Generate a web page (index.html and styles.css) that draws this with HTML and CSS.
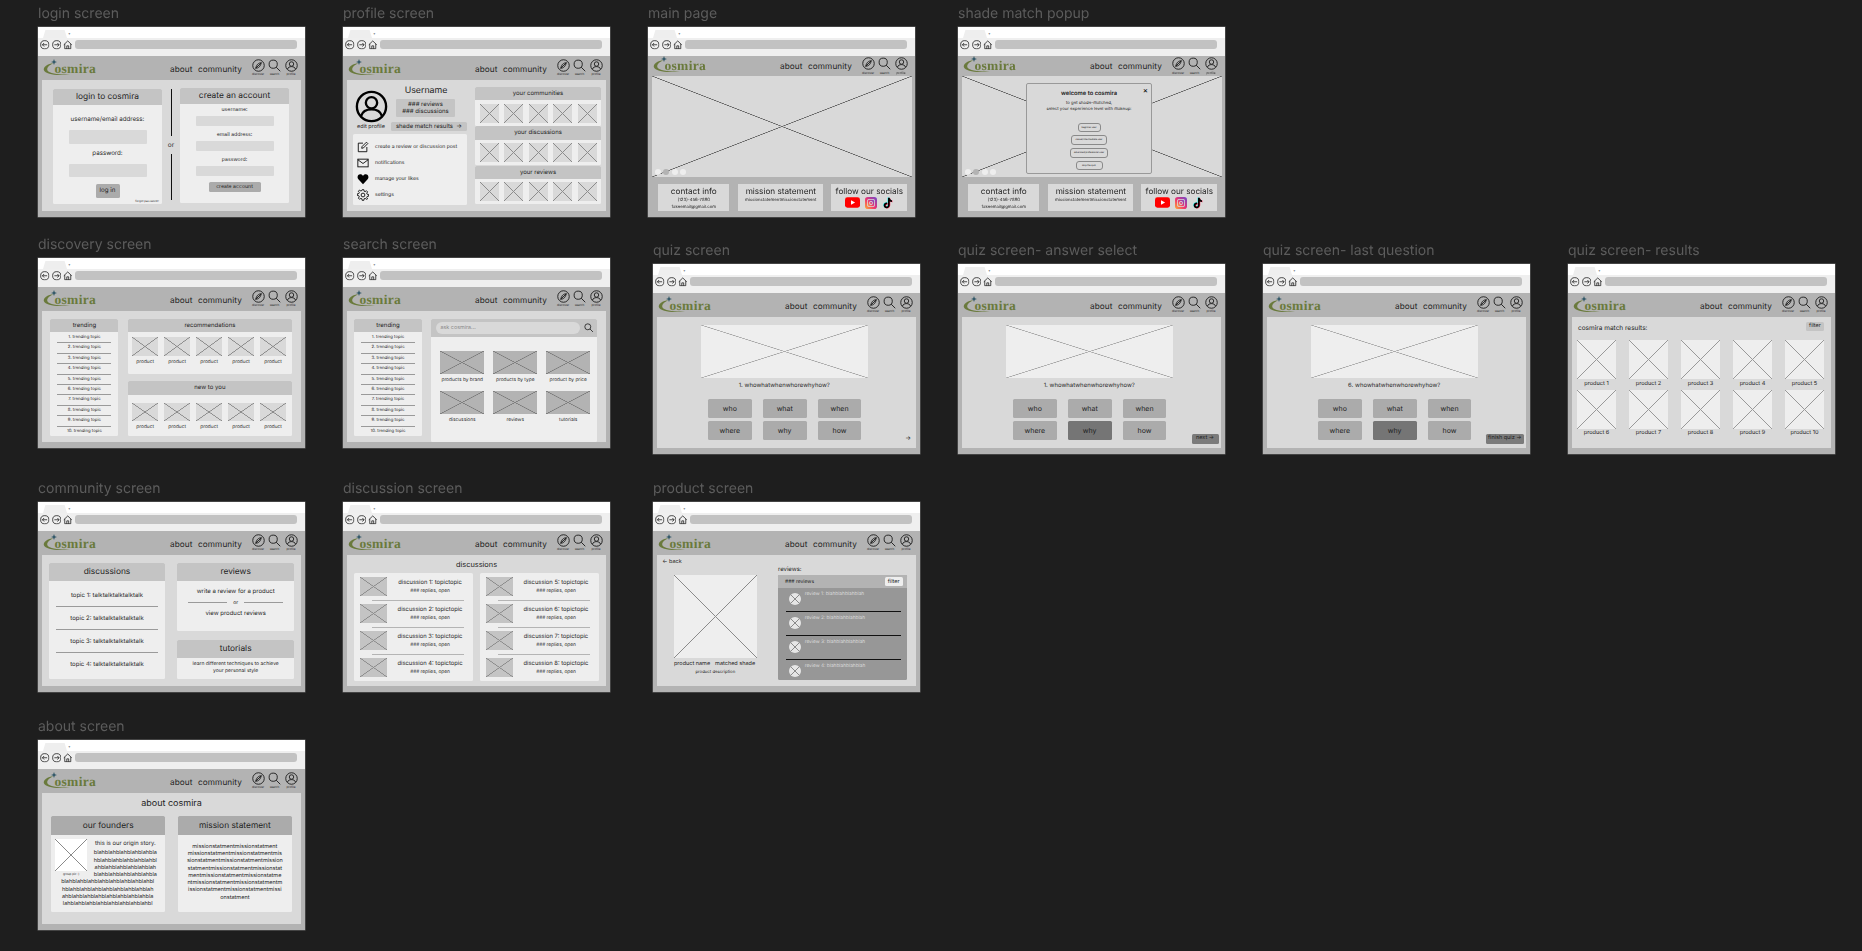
FILE: index.html
```html
<!DOCTYPE html>
<html lang="en">
<head>
  <meta charset="UTF-8" />
  <title>cosmira wireframes</title>
  <link rel="stylesheet" href="styles.css">
</head>
<body>

<svg class="defs" aria-hidden="true">
  <symbol id="i-back" viewBox="0 0 12 12"><circle cx="6" cy="6" r="5.2"/><path d="M9 6H3M5.2 3.8 3 6l2.2 2.2"/></symbol>
  <symbol id="i-fwd" viewBox="0 0 12 12"><circle cx="6" cy="6" r="5.2"/><path d="M3 6h6M6.8 3.8 9 6 6.8 8.2"/></symbol>
  <symbol id="i-home" viewBox="0 0 12 12"><path d="M1 6 6 1.2 11 6M2.2 5v6h7.6V5M4.8 11V7.4h2.4V11"/></symbol>
  <symbol id="i-compass" viewBox="0 0 14 14"><circle cx="7" cy="7" r="6.2"/><path d="M10 4C7 4.2 5 5.800 4 10 7 9.800 9 8.200 10 4ZM4 10l6-6"/></symbol>
  <symbol id="i-search" viewBox="0 0 14 14"><circle cx="5.600" cy="5.600" r="4.400"/><path d="m8.800 8.800 4.400 4.400"/></symbol>
  <symbol id="i-profile" viewBox="0 0 14 14"><circle cx="7" cy="7" r="6.200"/><circle cx="7" cy="5.400" r="2.400"/><path d="M2.600 11c.6-2 2.400-2.800 4.400-2.800s3.800.8 4.400 2.800"/></symbol>
  <symbol id="i-edit" viewBox="0 0 14 14"><path d="M7 2.500H1.500v10h10V7M5.500 8.500l.4-2L11 1.400l1.600 1.600-5.100 5.100z"/></symbol>
  <symbol id="i-mail" viewBox="0 0 14 14"><rect x="1" y="2.500" width="12" height="9"/><path d="m1 3.200 6 4.400 6-4.400"/></symbol>
  <symbol id="i-heart" viewBox="0 0 14 14"><path class="solid" d="M7 13 1.600 7.400C-.4 5 1 1.600 3.800 1.600 5.200 1.600 6.400 2.400 7 3.600 7.600 2.400 8.800 1.600 10.200 1.600 13 1.600 14.400 5 12.400 7.400z"/></symbol>
  <symbol id="i-gear" viewBox="0 0 14 14"><circle cx="7" cy="7" r="2.200"/><path d="M6 .8h2l.3 1.800 1.200.5L11 2l1.400 1.400-1.100 1.500.5 1.200 1.800.3v2l-1.800.3-.5 1.200 1.100 1.500L11 12l-1.500-1.100-1.200.5-.3 1.800H6l-.3-1.800-1.200-.5L3 12l-1.400-1.400 1.100-1.500-.5-1.200L.4 7.600v-2l1.800-.3.5-1.200L1.600 2.600 3 1.200l1.500 1.100 1.200-.5z"/></symbol>
  <symbol id="i-logo" viewBox="0 0 30 20"><path class="olive" d="M11 4C4 5 .3 8 .8 11 2.500 15.500 14 17 27 15.400 17 16 6.500 14.500 4.500 11.500 3.300 9 6 6 11 4Z"/><path class="star" d="m11 0 .8 2.200L14 3l-2.200.8L11 6l-.8-2.200L8 3l2.200-.8z"/></symbol>
  <symbol id="i-yt" viewBox="0 0 16 11"><rect width="16" height="11" rx="2.600" fill="#f00"/><path d="m6.400 3 4.400 2.500-4.400 2.500z" fill="#fff"/></symbol>
  <symbol id="i-ig" viewBox="0 0 12 12">
    <defs><linearGradient id="ig" x1="0" y1="1" x2="1" y2="0"><stop offset="0" stop-color="#fdb034"/><stop offset=".45" stop-color="#f0326e"/><stop offset="1" stop-color="#6a4ad0"/></linearGradient></defs>
    <rect width="12" height="12" rx="2.800" fill="url(#ig)"/><rect x="2" y="2" width="8" height="8" rx="2.200" fill="#d9d9d9"/><rect x="2.800" y="2.800" width="6.400" height="6.400" rx="1.600" fill="url(#ig)"/><circle cx="6" cy="6" r="1.900" fill="#d9d9d9"/><circle cx="6" cy="6" r="1.100" fill="url(#ig)"/>
  </symbol>
  <symbol id="i-tt" viewBox="0 0 14 14">
    <path fill="#25f4ee" transform="translate(-.6 -.4)" d="M7 1h2c.2 1.600 1.200 2.600 2.600 2.800v2c-1 0-1.900-.3-2.600-.9v4.400c0 2.200-1.700 3.700-3.600 3.700S2 11.500 2 9.800c0-2 1.800-3.600 4-3.300v2.100c-1-.3-1.900.3-1.900 1.200 0 .8.600 1.400 1.400 1.400S7 10.600 7 9.600z"/>
    <path fill="#fe2c55" transform="translate(.6 .4)" d="M7 1h2c.2 1.600 1.200 2.600 2.600 2.800v2c-1 0-1.900-.3-2.600-.9v4.400c0 2.200-1.700 3.700-3.600 3.700S2 11.500 2 9.800c0-2 1.800-3.600 4-3.300v2.100c-1-.3-1.900.3-1.900 1.200 0 .8.600 1.400 1.400 1.400S7 10.600 7 9.600z"/>
    <path fill="#000" d="M7 1h2c.2 1.600 1.200 2.600 2.600 2.800v2c-1 0-1.900-.3-2.600-.9v4.400c0 2.200-1.700 3.700-3.600 3.700S2 11.500 2 9.800c0-2 1.800-3.600 4-3.300v2.100c-1-.3-1.900.3-1.900 1.200 0 .8.600 1.400 1.400 1.400S7 10.600 7 9.600z"/>
  </symbol>
</svg>

<!-- login -->
<section class="board b-login">
  <h3>login screen</h3>
  <div class="frame">
    <div class="tabs"><span class="tab"></span><span class="plus">+</span></div>
    <div class="toolbar"><svg><use href="#i-back"/></svg><svg><use href="#i-fwd"/></svg><svg><use href="#i-home"/></svg><div class="url"></div></div>
    <header class="nav">
      <div class="logo"><svg><use href="#i-logo"/></svg>osmira</div>
      <div class="links"><span>about</span><span>community</span></div>
      <div class="nav-icons"><div><svg><use href="#i-compass"/></svg>discover</div><div><svg><use href="#i-search"/></svg>search</div><div><svg><use href="#i-profile"/></svg>profile</div></div>
    </header>
    <main class="page login">
      <div class="card login-card">
        <div class="card-head t-big">login to cosmira</div>
        <div class="form">
          <label>username/email address:</label><div class="input"></div>
          <label>password:</label><div class="input"></div>
          <div class="btn">log in</div>
          <div class="forgot">forgot password?</div>
        </div>
      </div>
      <div class="or-col"><i></i><span>or</span><i></i></div>
      <div class="card login-card signup">
        <div class="card-head t-big">create an account</div>
        <div class="form form-small">
          <label>username:</label><div class="input"></div>
          <label>email address:</label><div class="input"></div>
          <label>password:</label><div class="input"></div>
          <div class="btn">create account</div>
        </div>
      </div>
    </main>
  </div>
</section>

<!-- profile -->
<section class="board b-profile">
  <h3>profile screen</h3>
  <div class="frame">
    <div class="tabs"><span class="tab"></span><span class="plus">+</span></div>
    <div class="toolbar"><svg><use href="#i-back"/></svg><svg><use href="#i-fwd"/></svg><svg><use href="#i-home"/></svg><div class="url"></div></div>
    <header class="nav">
      <div class="logo"><svg><use href="#i-logo"/></svg>osmira</div>
      <div class="links"><span>about</span><span>community</span></div>
      <div class="nav-icons"><div><svg><use href="#i-compass"/></svg>discover</div><div><svg><use href="#i-search"/></svg>search</div><div><svg><use href="#i-profile"/></svg>profile</div></div>
    </header>
    <main class="page profile">
      <div class="profile-left">
        <div class="profile-top">
          <div class="avatar"><svg><use href="#i-profile"/></svg><span>edit profile</span></div>
          <div class="profile-info">
            <div class="username">Username</div>
            <div class="stats">### reviews<br>### discussions</div>
            <div class="shade-btn">shade match results &nbsp;→</div>
          </div>
        </div>
        <ul class="card profile-menu">
          <li><svg><use href="#i-edit"/></svg>create a review or discussion post</li>
          <li><svg><use href="#i-mail"/></svg>notifications</li>
          <li><svg><use href="#i-heart"/></svg>manage your likes</li>
          <li><svg><use href="#i-gear"/></svg>settings</li>
        </ul>
      </div>
      <div class="profile-right">
        <div class="card"><div class="card-head">your communities</div><div class="thumbs-19"><div class="ph"></div><div class="ph"></div><div class="ph"></div><div class="ph"></div><div class="ph"></div></div></div>
        <div class="card"><div class="card-head">your discussions</div><div class="thumbs-19"><div class="ph"></div><div class="ph"></div><div class="ph"></div><div class="ph"></div><div class="ph"></div></div></div>
        <div class="card"><div class="card-head">your reviews</div><div class="thumbs-19"><div class="ph"></div><div class="ph"></div><div class="ph"></div><div class="ph"></div><div class="ph"></div></div></div>
      </div>
    </main>
  </div>
</section>

<!-- main page -->
<section class="board b-main">
  <h3>main page</h3>
  <div class="frame">
    <div class="tabs"><span class="tab"></span><span class="plus">+</span></div>
    <div class="toolbar"><svg><use href="#i-back"/></svg><svg><use href="#i-fwd"/></svg><svg><use href="#i-home"/></svg><div class="url"></div></div>
    <header class="nav nav-short">
      <div class="logo"><svg><use href="#i-logo"/></svg>osmira</div>
      <div class="links"><span>about</span><span>community</span></div>
      <div class="nav-icons"><div><svg><use href="#i-compass"/></svg>discover</div><div><svg><use href="#i-search"/></svg>search</div><div><svg><use href="#i-profile"/></svg>profile</div></div>
    </header>
    <div class="hero ph"><div class="dots"><i></i><i></i><i></i><i></i></div></div>
    <footer class="foot">
      <div class="foot-card contact"><b>contact info</b><span>(123)-456-7890<br>fakeemail@gmail.com</span></div>
      <div class="foot-card mission"><b>mission statement</b><span>missionstatementmissionstatement</span></div>
      <div class="foot-card socials"><b>follow our socials</b><div class="social-icons"><svg class="yt"><use href="#i-yt"/></svg><svg><use href="#i-ig"/></svg><svg><use href="#i-tt"/></svg></div></div>
    </footer>
  </div>
</section>

<!-- popup -->
<section class="board b-popup">
  <h3>shade match popup</h3>
  <div class="frame">
    <div class="tabs"><span class="tab"></span><span class="plus">+</span></div>
    <div class="toolbar"><svg><use href="#i-back"/></svg><svg><use href="#i-fwd"/></svg><svg><use href="#i-home"/></svg><div class="url"></div></div>
    <header class="nav nav-short">
      <div class="logo"><svg><use href="#i-logo"/></svg>osmira</div>
      <div class="links"><span>about</span><span>community</span></div>
      <div class="nav-icons"><div><svg><use href="#i-compass"/></svg>discover</div><div><svg><use href="#i-search"/></svg>search</div><div><svg><use href="#i-profile"/></svg>profile</div></div>
    </header>
    <div class="hero ph"><div class="dots"><i></i><i></i><i></i><i></i></div></div>
    <footer class="foot">
      <div class="foot-card contact"><b>contact info</b><span>(123)-456-7890<br>fakeemail@gmail.com</span></div>
      <div class="foot-card mission"><b>mission statement</b><span>missionstatementmissionstatement</span></div>
      <div class="foot-card socials"><b>follow our socials</b><div class="social-icons"><svg class="yt"><use href="#i-yt"/></svg><svg><use href="#i-ig"/></svg><svg><use href="#i-tt"/></svg></div></div>
    </footer>
    <div class="popup">
      <span class="close">×</span>
      <strong>welcome to cosmira</strong>
      <p>to get shade-matched,<br>select your experience level with makeup:</p>
      <div class="pop-btn w1">beginner user</div>
      <div class="pop-btn w2">casual/intermediate user</div>
      <div class="pop-btn w3">advanced/professional user</div>
      <div class="pop-btn w4">skip the quiz</div>
    </div>
  </div>
</section>

<!-- discovery -->
<section class="board b-discovery">
  <h3>discovery screen</h3>
  <div class="frame">
    <div class="tabs"><span class="tab"></span><span class="plus">+</span></div>
    <div class="toolbar"><svg><use href="#i-back"/></svg><svg><use href="#i-fwd"/></svg><svg><use href="#i-home"/></svg><div class="url"></div></div>
    <header class="nav">
      <div class="logo"><svg><use href="#i-logo"/></svg>osmira</div>
      <div class="links"><span>about</span><span>community</span></div>
      <div class="nav-icons"><div><svg><use href="#i-compass"/></svg>discover</div><div><svg><use href="#i-search"/></svg>search</div><div><svg><use href="#i-profile"/></svg>profile</div></div>
    </header>
    <main class="page discovery">
      <div class="card trending">
        <div class="card-head">trending</div>
        <ol>
          <li>1. trending topic</li><li>2. trending topic</li><li>3. trending topic</li><li>4. trending topic</li><li>5. trending topic</li>
          <li>6. trending topic</li><li>7. trending topic</li><li>8. trending topic</li><li>9. trending topic</li><li>10. trending topic</li>
        </ol>
      </div>
      <div class="disc-col">
        <div class="card">
          <div class="card-head">recommendations</div>
          <div class="products"><div><div class="ph"></div>product</div><div><div class="ph"></div>product</div><div><div class="ph"></div>product</div><div><div class="ph"></div>product</div><div><div class="ph"></div>product</div></div>
        </div>
        <div class="card">
          <div class="card-head head-tall">new to you</div>
          <div class="products products-low"><div><div class="ph"></div>product</div><div><div class="ph"></div>product</div><div><div class="ph"></div>product</div><div><div class="ph"></div>product</div><div><div class="ph"></div>product</div></div>
        </div>
      </div>
    </main>
  </div>
</section>

<!-- search -->
<section class="board b-search">
  <h3>search screen</h3>
  <div class="frame">
    <div class="tabs"><span class="tab"></span><span class="plus">+</span></div>
    <div class="toolbar"><svg><use href="#i-back"/></svg><svg><use href="#i-fwd"/></svg><svg><use href="#i-home"/></svg><div class="url"></div></div>
    <header class="nav">
      <div class="logo"><svg><use href="#i-logo"/></svg>osmira</div>
      <div class="links"><span>about</span><span>community</span></div>
      <div class="nav-icons"><div><svg><use href="#i-compass"/></svg>discover</div><div><svg><use href="#i-search"/></svg>search</div><div><svg><use href="#i-profile"/></svg>profile</div></div>
    </header>
    <main class="page discovery search">
      <div class="card trending">
        <div class="card-head">trending</div>
        <ol>
          <li>1. trending topic</li><li>2. trending topic</li><li>3. trending topic</li><li>4. trending topic</li><li>5. trending topic</li>
          <li>6. trending topic</li><li>7. trending topic</li><li>8. trending topic</li><li>9. trending topic</li><li>10. trending topic</li>
        </ol>
      </div>
      <div class="card search-main">
        <div class="search-head"><div class="ask">ask cosmira...</div><svg><use href="#i-search"/></svg></div>
        <div class="search-grid">
          <div><div class="ph"></div>products by brand</div><div><div class="ph"></div>products by type</div><div><div class="ph"></div>product by price</div>
          <div><div class="ph"></div>discussions</div><div><div class="ph"></div>reviews</div><div><div class="ph"></div>tutorials</div>
        </div>
      </div>
    </main>
  </div>
</section>

<!-- quiz -->
<section class="board b-quiz">
  <h3>quiz screen</h3>
  <div class="frame">
    <div class="tabs"><span class="tab"></span><span class="plus">+</span></div>
    <div class="toolbar"><svg><use href="#i-back"/></svg><svg><use href="#i-fwd"/></svg><svg><use href="#i-home"/></svg><div class="url"></div></div>
    <header class="nav">
      <div class="logo"><svg><use href="#i-logo"/></svg>osmira</div>
      <div class="links"><span>about</span><span>community</span></div>
      <div class="nav-icons"><div><svg><use href="#i-compass"/></svg>discover</div><div><svg><use href="#i-search"/></svg>search</div><div><svg><use href="#i-profile"/></svg>profile</div></div>
    </header>
    <main class="page quiz">
      <div class="ph quiz-img"></div>
      <div class="question">1. whowhatwhenwhorewhyhow?</div>
      <div class="answers"><div>who</div><div>what</div><div>when</div><div>where</div><div>why</div><div>how</div></div>
      <div class="next plain">→</div>
    </main>
  </div>
</section>

<section class="board b-answer">
  <h3>quiz screen- answer select</h3>
  <div class="frame">
    <div class="tabs"><span class="tab"></span><span class="plus">+</span></div>
    <div class="toolbar"><svg><use href="#i-back"/></svg><svg><use href="#i-fwd"/></svg><svg><use href="#i-home"/></svg><div class="url"></div></div>
    <header class="nav">
      <div class="logo"><svg><use href="#i-logo"/></svg>osmira</div>
      <div class="links"><span>about</span><span>community</span></div>
      <div class="nav-icons"><div><svg><use href="#i-compass"/></svg>discover</div><div><svg><use href="#i-search"/></svg>search</div><div><svg><use href="#i-profile"/></svg>profile</div></div>
    </header>
    <main class="page quiz">
      <div class="ph quiz-img"></div>
      <div class="question">1. whowhatwhenwhorewhyhow?</div>
      <div class="answers"><div>who</div><div>what</div><div>when</div><div>where</div><div class="picked">why</div><div>how</div></div>
      <div class="next">next →</div>
    </main>
  </div>
</section>

<section class="board b-last">
  <h3>quiz screen- last question</h3>
  <div class="frame">
    <div class="tabs"><span class="tab"></span><span class="plus">+</span></div>
    <div class="toolbar"><svg><use href="#i-back"/></svg><svg><use href="#i-fwd"/></svg><svg><use href="#i-home"/></svg><div class="url"></div></div>
    <header class="nav">
      <div class="logo"><svg><use href="#i-logo"/></svg>osmira</div>
      <div class="links"><span>about</span><span>community</span></div>
      <div class="nav-icons"><div><svg><use href="#i-compass"/></svg>discover</div><div><svg><use href="#i-search"/></svg>search</div><div><svg><use href="#i-profile"/></svg>profile</div></div>
    </header>
    <main class="page quiz">
      <div class="ph quiz-img"></div>
      <div class="question">6. whowhatwhenwhorewhyhow?</div>
      <div class="answers"><div>who</div><div>what</div><div>when</div><div>where</div><div class="picked">why</div><div>how</div></div>
      <div class="next">finish quiz →</div>
    </main>
  </div>
</section>

<section class="board b-results">
  <h3>quiz screen- results</h3>
  <div class="frame">
    <div class="tabs"><span class="tab"></span><span class="plus">+</span></div>
    <div class="toolbar"><svg><use href="#i-back"/></svg><svg><use href="#i-fwd"/></svg><svg><use href="#i-home"/></svg><div class="url"></div></div>
    <header class="nav">
      <div class="logo"><svg><use href="#i-logo"/></svg>osmira</div>
      <div class="links"><span>about</span><span>community</span></div>
      <div class="nav-icons"><div><svg><use href="#i-compass"/></svg>discover</div><div><svg><use href="#i-search"/></svg>search</div><div><svg><use href="#i-profile"/></svg>profile</div></div>
    </header>
    <main class="page results">
      <div class="results-head"><span>cosmira match results:</span><div class="filter">filter</div></div>
      <div class="results-grid">
        <div><div class="ph"></div>product 1</div><div><div class="ph"></div>product 2</div><div><div class="ph"></div>product 3</div><div><div class="ph"></div>product 4</div><div><div class="ph"></div>product 5</div>
        <div><div class="ph"></div>product 6</div><div><div class="ph"></div>product 7</div><div><div class="ph"></div>product 8</div><div><div class="ph"></div>product 9</div><div><div class="ph"></div>product 10</div>
      </div>
    </main>
  </div>
</section>

<!-- community -->
<section class="board b-community">
  <h3>community screen</h3>
  <div class="frame">
    <div class="tabs"><span class="tab"></span><span class="plus">+</span></div>
    <div class="toolbar"><svg><use href="#i-back"/></svg><svg><use href="#i-fwd"/></svg><svg><use href="#i-home"/></svg><div class="url"></div></div>
    <header class="nav">
      <div class="logo"><svg><use href="#i-logo"/></svg>osmira</div>
      <div class="links"><span>about</span><span>community</span></div>
      <div class="nav-icons"><div><svg><use href="#i-compass"/></svg>discover</div><div><svg><use href="#i-search"/></svg>search</div><div><svg><use href="#i-profile"/></svg>profile</div></div>
    </header>
    <main class="page community">
      <div class="card comm-left">
        <div class="card-head t-big head-18">discussions</div>
        <ul>
          <li>topic 1: talktalktalktalktalk</li><li>topic 2: talktalktalktalktalk</li><li>topic 3: talktalktalktalktalk</li><li>topic 4: talktalktalktalktalk</li>
        </ul>
      </div>
      <div class="comm-right">
        <div class="card reviews-card">
          <div class="card-head t-big head-18">reviews</div>
          <p>write a review for a product</p>
          <div class="or-line"><i></i>or<i></i></div>
          <p>view product reviews</p>
        </div>
        <div class="card tutorials-card">
          <div class="card-head t-big head-18">tutorials</div>
          <p>learn different techniques to achieve<br>your personal style</p>
        </div>
      </div>
    </main>
  </div>
</section>

<section class="board b-discussion">
  <h3>discussion screen</h3>
  <div class="frame">
    <div class="tabs"><span class="tab"></span><span class="plus">+</span></div>
    <div class="toolbar"><svg><use href="#i-back"/></svg><svg><use href="#i-fwd"/></svg><svg><use href="#i-home"/></svg><div class="url"></div></div>
    <header class="nav">
      <div class="logo"><svg><use href="#i-logo"/></svg>osmira</div>
      <div class="links"><span>about</span><span>community</span></div>
      <div class="nav-icons"><div><svg><use href="#i-compass"/></svg>discover</div><div><svg><use href="#i-search"/></svg>search</div><div><svg><use href="#i-profile"/></svg>profile</div></div>
    </header>
    <main class="page discussion">
      <h4>discussions</h4>
      <div class="disc-grid">
        <div class="card disc-card">
          <div class="disc-row"><div class="ph"></div><div>discussion 1: topictopic<small>### replies, open</small></div></div>
          <div class="disc-row"><div class="ph"></div><div>discussion 2: topictopic<small>### replies, open</small></div></div>
          <div class="disc-row"><div class="ph"></div><div>discussion 3: topictopic<small>### replies, open</small></div></div>
          <div class="disc-row"><div class="ph"></div><div>discussion 4: topictopic<small>### replies, open</small></div></div>
        </div>
        <div class="card disc-card">
          <div class="disc-row"><div class="ph"></div><div>discussion 5: topictopic<small>### replies, open</small></div></div>
          <div class="disc-row"><div class="ph"></div><div>discussion 6: topictopic<small>### replies, open</small></div></div>
          <div class="disc-row"><div class="ph"></div><div>discussion 7: topictopic<small>### replies, open</small></div></div>
          <div class="disc-row"><div class="ph"></div><div>discussion 8: topictopic<small>### replies, open</small></div></div>
        </div>
      </div>
    </main>
  </div>
</section>

<section class="board b-product">
  <h3>product screen</h3>
  <div class="frame">
    <div class="tabs"><span class="tab"></span><span class="plus">+</span></div>
    <div class="toolbar"><svg><use href="#i-back"/></svg><svg><use href="#i-fwd"/></svg><svg><use href="#i-home"/></svg><div class="url"></div></div>
    <header class="nav">
      <div class="logo"><svg><use href="#i-logo"/></svg>osmira</div>
      <div class="links"><span>about</span><span>community</span></div>
      <div class="nav-icons"><div><svg><use href="#i-compass"/></svg>discover</div><div><svg><use href="#i-search"/></svg>search</div><div><svg><use href="#i-profile"/></svg>profile</div></div>
    </header>
    <main class="page product">
      <div class="product-left">
        <div class="back">← back</div>
        <div class="ph product-img"></div>
        <div class="product-name"><span>product name</span><span>matched shade</span></div>
        <div class="product-desc">product description</div>
      </div>
      <div class="product-right">
        <div class="reviews-label">reviews:</div>
        <div class="review-panel">
          <div class="review-head"><span>### reviews</span><div class="filter">filter</div></div>
          <div class="review"><div class="ph"></div>review 1: blahblahblahblah</div>
          <div class="review"><div class="ph"></div>review 2: blahblahblahblah</div>
          <div class="review"><div class="ph"></div>review 3: blahblahblahblah</div>
          <div class="review"><div class="ph"></div>review 4: blahblahblahblah</div>
        </div>
      </div>
    </main>
  </div>
</section>

<!-- about -->
<section class="board b-about">
  <h3>about screen</h3>
  <div class="frame">
    <div class="tabs"><span class="tab"></span><span class="plus">+</span></div>
    <div class="toolbar"><svg><use href="#i-back"/></svg><svg><use href="#i-fwd"/></svg><svg><use href="#i-home"/></svg><div class="url"></div></div>
    <header class="nav">
      <div class="logo"><svg><use href="#i-logo"/></svg>osmira</div>
      <div class="links"><span>about</span><span>community</span></div>
      <div class="nav-icons"><div><svg><use href="#i-compass"/></svg>discover</div><div><svg><use href="#i-search"/></svg>search</div><div><svg><use href="#i-profile"/></svg>profile</div></div>
    </header>
    <main class="page about">
      <h4>about cosmira</h4>
      <div class="about-grid">
        <div class="card">
          <div class="card-head t-big head-dark">our founders</div>
          <div class="founders">
            <figure><div class="ph"></div><figcaption>group pic :)</figcaption></figure>
            <div class="origin">this is our origin story.</div>
            <p>blahblahblahblahblahbla<br>hblahblahblahblahblahbl<br>ahblahblahblahblahblah<br>blahblahblahblahblahbla<br>blahblahblahblahblahblahblahblahbl<br>hblahblahblahblahblahblahblahblah<br>ahblahblahblahblahblahblahblahbla<br>lahblahblahblahblahblahblahblahbl</p>
          </div>
        </div>
        <div class="card">
          <div class="card-head t-big head-dark">mission statement</div>
          <p class="mission-text">missionstatmentmissionstatment<br>missionstatmentmissionstatmentmis<br>sionstatmentmissionstatmentmission<br>statmentmissionstatmentmissionstat<br>mentmissionstatmentmissionstatme<br>ntmissionstatmentmissionstatmentm<br>issionstatmentmissionstatmentmissi<br>onstatment</p>
        </div>
      </div>
    </main>
  </div>
</section>

</body>
</html>
```

FILE: styles.css
```css
* {
  box-sizing: border-box;
}
html, body {
  margin: 0;
  height: 951px;
  overflow: hidden;
}
body {
  background: #1e1e1e;
  font-family: Inter, "Liberation Sans", sans-serif;
  color: #1e1e1e;
  position: relative;
  text-rendering: geometricPrecision;
}
h3, h4, p, ul, ol, figure {
  margin: 0;
  padding: 0;
  font-weight: 400;
  list-style: none;
}
.defs {
  position: absolute;
  width: 0;
  height: 0;
}
svg {
  display: block;
  fill: none;
  stroke: currentColor;
  stroke-width: 1;
}

/* canvas placement: each board sits free on the figma canvas */
.board {
  position: absolute;
  width: 267px;
  filter: blur(.3px);
}
.board h3 {
  height: 22px;
  font-size: 14px;
  line-height: 17px;
  color: #5c5c5c;
  white-space: nowrap;
}
.b-login { left: 38px; top: 5px; }
.b-profile { left: 343px; top: 5px; }
.b-main { left: 648px; top: 5px; }
.b-popup { left: 958px; top: 5px; }
.b-discovery { left: 38px; top: 236px; }
.b-search { left: 343px; top: 236px; }
.b-quiz { left: 653px; top: 242px; }
.b-answer { left: 958px; top: 242px; }
.b-last { left: 1263px; top: 242px; }
.b-results { left: 1568px; top: 242px; }
.b-community { left: 38px; top: 480px; }
.b-discussion { left: 343px; top: 480px; }
.b-product { left: 653px; top: 480px; }
.b-about { left: 38px; top: 718px; }

/* browser chrome */
.frame {
  position: relative;
  width: 267px;
  height: 190px;
  background: #b3b3b3;
  display: flex;
  flex-direction: column;
  box-shadow: 0 0 0 .5px #6a6a6a;
  overflow: hidden;
}
.tabs {
  height: 11px;
  background: #fff;
  display: flex;
  align-items: flex-end;
  padding-left: 5px;
}
.tab {
  width: 24px;
  height: 8px;
  background: #eee;
  clip-path: polygon(10% 0, 90% 0, 100% 100%, 0 100%);
}
.plus {
  font-size: 4px;
  line-height: 8px;
  margin-left: 1px;
}
.toolbar {
  height: 18px;
  background: #efefef;
  display: flex;
  align-items: flex-start;
  gap: 2px;
  padding: 2px 8px 0 2px;
}
.toolbar svg {
  width: 9.5px;
  height: 9.5px;
}
.url {
  flex: 1;
  height: 9px;
  background: #c2c2c2;
  border-radius: 3px;
}

/* site nav */
.nav {
  height: 24px;
  flex: none;
  display: flex;
  align-items: center;
  padding: 0 7px 0 5px;
  background: #b3b3b3;
}
.logo {
  position: relative;
  padding-left: 11.5px;
  margin-top: 1px;
  font-family: "Liberation Serif", serif;
  font-weight: 700;
  font-size: 13.5px;
  letter-spacing: .3px;
  line-height: 14px;
  color: #6a7a3c;
}
.logo svg {
  position: absolute;
  left: 0;
  top: -3px;
  width: 30px;
  height: 20px;
  stroke: none;
}
.olive { fill: #6a7a3c; }
.star { fill: #2e5566; }
.solid { fill: currentColor; stroke: none; }
.links {
  margin-left: auto;
  display: flex;
  gap: 5.5px;
  font-size: 8.2px;
  letter-spacing: .1px;
  margin-top: 2px;
}
.nav-icons {
  margin-left: 9px;
  display: flex;
  gap: 2.5px;
  align-self: flex-start;
  padding-top: 2.5px;
  font-size: 3px;
  line-height: 4px;
  text-align: center;
}
.nav-icons > div {
  width: 14px;
  display: flex;
  flex-direction: column;
  align-items: center;
  white-space: nowrap;
}
.nav-icons svg {
  width: 13px;
  height: 13px;
  margin-bottom: .5px;
}
.nav-short {
  height: 20px;
}
.nav-short .logo { margin-top: -1px; }
.nav-short .links { margin-top: 0; }
.nav-short .nav-icons { padding-top: 1px; }

/* shared bits */
.page {
  position: relative;
  height: 131px;
  margin: 0 4px;
  background: #d9d9d9;
  flex: none;
}
.card {
  background: #eee;
  border-radius: 1.5px;
}
.card-head {
  height: 13.3px;
  display: flex;
  align-items: center;
  justify-content: center;
  background: #c4c4c4;
  border-radius: 1.5px 1.5px 0 0;
  font-size: 6px;
}
.t-big {
  height: 16px;
  font-size: 8.4px;
}
.head-18 { height: 18px; }
.head-tall { height: 14px; }
.head-dark { background: #ababab; height: 18.7px; }
.ph {
  --bg: #d9d9d9;
  --line: #8c8c8c;
  background-color: var(--bg);
  background-image:
    linear-gradient(to top right, transparent calc(50% - .6px), var(--line) calc(50% - .2px), var(--line) calc(50% + .2px), transparent calc(50% + .6px)),
    linear-gradient(to bottom right, transparent calc(50% - .6px), var(--line) calc(50% - .2px), var(--line) calc(50% + .2px), transparent calc(50% + .6px));
}
.filter {
  background: #c4c4c4;
  border-radius: 1.5px;
  display: flex;
  align-items: center;
  justify-content: center;
  width: 18px;
  height: 8.700px;
  font-size: 5.5px;
}

/* login */
.login {
  display: flex;
  padding: 9px 11px 0;
}
.login-card {
  width: 109px;
  height: 115px;
}
.signup {
  margin-top: -1px;
}
.form {
  display: flex;
  flex-direction: column;
  align-items: center;
  padding-top: 11px;
  gap: 6px;
  font-size: 6.2px;
  position: relative;
}
.form label {
  line-height: 8px;
}
.input {
  width: 78px;
  height: 13.500px;
  background: #d9d9d9;
  border-radius: 1px;
}
.btn {
  background: #ababab;
  border-radius: 1.5px;
  width: 24px;
  height: 13.500px;
  margin-top: 1px;
  display: flex;
  align-items: center;
  justify-content: center;
}
.forgot {
  position: absolute;
  right: 3px;
  bottom: -5px;
  font-size: 2.900px;
}
.form-small {
  padding-top: 2px;
  gap: 2px;
  font-size: 5.2px;
}
.form-small .input {
  height: 10px;
  margin-bottom: 3px;
}
.form-small .btn {
  width: 52px;
  height: 9.500px;
  margin-top: 1px;
}
.or-col {
  width: 18px;
  display: flex;
  flex-direction: column;
  align-items: center;
  font-size: 6.500px;
  color: #333;
  height: 111px;
}
.or-col i {
  width: 1px;
  flex: 1;
  background: #111;
}
.or-col span {
  line-height: 18px;
}

/* profile */
.profile {
  display: flex;
  gap: 8px;
  padding: 7px 5px 0 6px;
}
.profile-left {
  width: 114px;
  font-size: 5.500px;
}
.profile-top {
  display: flex;
  height: 47px;
}
.avatar {
  width: 36px;
  padding-top: 3px;
  display: flex;
  flex-direction: column;
  align-items: center;
  color: #000;
}
.avatar svg {
  width: 33px;
  height: 33px;
}
.avatar span {
  margin-top: 1px;
  line-height: 7px;
  color: #1e1e1e;
  white-space: nowrap;
}
.profile-info {
  flex: 1;
  margin-left: 2px;
  text-align: center;
  font-size: 6px;
}
.username {
  font-size: 8.800px;
  line-height: 10px;
  margin-top: -1px;
  margin-right: 6px;
}
.stats {
  width: 59px;
  margin: 3px auto 0 5px;
  padding: 1.500px 0;
  background: #c4c4c4;
  border-radius: 1px;
  line-height: 7.500px;
}
.shade-btn {
  height: 9px;
  margin-top: 5px;
  background: #c4c4c4;
  border-radius: 1.500px;
  line-height: 9px;
  white-space: nowrap;
}
.profile-menu {
  height: 71px;
  padding-top: 5px;
}
.profile-menu li {
  height: 16px;
  display: flex;
  align-items: center;
  gap: 6px;
  padding-left: 4px;
  font-size: 5.100px;
  white-space: nowrap;
}
.profile-menu svg {
  width: 12px;
  height: 12px;
  color: #000;
}
.profile-right {
  flex: 1;
  display: flex;
  flex-direction: column;
  gap: .5px;
}
.thumbs-19 {
  height: 25.500px;
  display: flex;
  align-items: center;
  gap: 5.400px;
  padding-left: 5px;
}
.thumbs-19 .ph {
  width: 19px;
  height: 19px;
}

/* discovery + search */
.discovery {
  display: flex;
  gap: 9.400px;
  padding: 7.700px 9px 0 8.400px;
}
.trending {
  width: 68px;
  height: 117.700px;
  flex: none;
}
.trending ol {
  padding: 1px 7px 0;
  text-align: center;
  font-size: 4.300px;
}
.trending li {
  height: 10.400px;
  line-height: 10.400px;
  border-bottom: .6px solid #9a9a9a;
  white-space: nowrap;
}
.trending li:last-child {
  border-bottom: 0;
}
.disc-col {
  flex: 1;
  display: flex;
  flex-direction: column;
  gap: 6.700px;
}
.disc-col .card {
  height: 55.500px;
}
.products {
  display: flex;
  gap: 6.400px;
  padding: 5.400px 4.600px 0;
  font-size: 4.800px;
  text-align: center;
}
.products > div {
  width: 25.600px;
  line-height: 7px;
}
.products .ph {
  height: 18.300px;
  margin-bottom: 3px;
}
.products-low {
  padding-top: 7.700px;
}
.search {
  gap: 9.200px;
  padding-left: 7px;
}
.search-main {
  flex: 1;
}
.search-head {
  height: 18.300px;
  display: flex;
  align-items: center;
  padding-left: 5.300px;
  background: #c4c4c4;
  border-radius: 1.500px 1.500px 0 0;
}
.ask {
  width: 144px;
  height: 12.600px;
  line-height: 12.600px;
  padding-left: 4px;
  background: #d9d9d9;
  border-radius: 6.300px;
  font-size: 5.400px;
  color: #8a8a8a;
}
.search-head svg {
  width: 9.500px;
  height: 9.500px;
  margin-left: 3.500px;
  stroke-width: 1.200;
}
.search-grid {
  display: grid;
  grid-template-columns: repeat(3, 43.500px);
  column-gap: 9.500px;
  row-gap: 7px;
  padding: 14px 0 0 9.300px;
  font-size: 4.800px;
  text-align: center;
  white-space: nowrap;
}
.search-grid > div {
  line-height: 7px;
}
.search-grid .ph {
  height: 23px;
  --bg: #b3b3b3;
  --line: #7d7d7d;
  margin-bottom: 3px;
}

/* quiz */
.quiz {
  padding: 8px 0 0 43.500px;
}
.quiz-img {
  --bg: #eee;
  --line: #aaa;
  width: 167.500px;
  height: 53px;
}
.question {
  width: 167.500px;
  text-align: center;
  font-size: 5.900px;
  line-height: 8px;
  margin-top: 4px;
  letter-spacing: .05px;
}
.answers {
  display: grid;
  grid-template-columns: repeat(3, 43.800px);
  grid-auto-rows: 18.700px;
  gap: 3.600px 11px;
  margin: 9px 0 0 7.500px;
  font-size: 7px;
}
.answers div {
  background: #ababab;
  border-radius: 1.500px;
  display: flex;
  align-items: center;
  justify-content: center;
}
.answers .picked {
  background: #757575;
}
.next {
  position: absolute;
  right: 2.500px;
  bottom: 4px;
  min-width: 27px;
  height: 9.700px;
  padding: 0 2px;
  background: #7b7b7b;
  border-radius: 1.500px;
  font-size: 5.500px;
  line-height: 9.700px;
  text-align: center;
}
.next.plain {
  min-width: 0;
  background: none;
  font-size: 6px;
  right: 3px;
}

/* results */
.results {
  padding: 5px 6px 0 5px;
}
.results-head {
  display: flex;
  justify-content: space-between;
  height: 18px;
  font-size: 6.500px;
  line-height: 10px;
  padding: 0 1px 0 1px;
}
.results-head span {
  margin-top: 1px;
}
.results-grid {
  display: grid;
  grid-template-columns: repeat(5, 39px);
  gap: 2px 13px;
  font-size: 5.600px;
  line-height: 8px;
  text-align: center;
  white-space: nowrap;
}
.results-grid .ph {
  --bg: #eee;
  --line: #999;
  height: 39px;
  margin-bottom: .5px;
}

/* community */
.community {
  display: flex;
  gap: 12.300px;
  padding: 8px 7px 0;
}
.comm-left {
  width: 116px;
  height: 116px;
}
.comm-left ul {
  padding: 3px 7px 0;
  text-align: center;
  font-size: 6px;
}
.comm-left li {
  height: 23px;
  line-height: 23px;
  border-bottom: .7px solid #9a9a9a;
}
.comm-left li:last-child {
  border-bottom: 0;
}
.comm-right {
  flex: 1;
  display: flex;
  flex-direction: column;
  gap: 9.700px;
}
.reviews-card {
  height: 67.700px;
  text-align: center;
  font-size: 6px;
}
.reviews-card p {
  line-height: 8px;
}
.reviews-card p:nth-of-type(1) {
  margin-top: 6.500px;
}
.or-line {
  display: flex;
  align-items: center;
  gap: 6px;
  padding: 0 11px;
  margin: 3px 0;
  line-height: 8px;
  font-size: 5px;
}
.or-line i {
  flex: 1;
  height: .6px;
  background: #9a9a9a;
}
.tutorials-card {
  height: 38.600px;
  text-align: center;
  font-size: 5px;
}
.tutorials-card p {
  line-height: 7px;
  padding-top: 2.500px;
}

/* discussions */
.discussion h4 {
  height: 18px;
  line-height: 19px;
  text-align: center;
  font-size: 7.400px;
}
.disc-grid {
  display: flex;
  gap: 7px;
  padding: 0 7px;
}
.disc-card {
  flex: 1;
  height: 107.700px;
  padding: 0 6px;
}
.disc-row {
  display: flex;
  align-items: center;
  gap: 6px;
  height: 27px;
  text-align: center;
  font-size: 5.800px;
  line-height: 8px;
  white-space: nowrap;
}
.disc-row .ph {
  --bg: #c4c4c4;
  width: 27px;
  height: 18.500px;
  flex: none;
}
.disc-row > div:last-child {
  flex: 1;
}
.disc-row small {
  display: block;
  font-size: 4.800px;
}
.disc-row + .disc-row {
  background: linear-gradient(#9a9a9a, #9a9a9a) no-repeat 12px 0 / 92px .7px;
}

/* product */
.product {
  display: flex;
  font-size: 5.500px;
}
.product-left {
  width: 121px;
  padding: 3px 0 0 5.300px;
  line-height: 8px;
}
.product-img {
  --bg: #eee;
  --line: #8a8a8a;
  width: 82.700px;
  height: 82.700px;
  margin: 9.300px 0 0 11.700px;
}
.product-name {
  width: 90px;
  margin: 2.500px 0 0 11.700px;
  display: flex;
  gap: 5px;
  white-space: nowrap;
}
.product-desc {
  width: 82.700px;
  margin: 1px 0 0 11.700px;
  text-align: center;
  font-size: 4.300px;
}
.product-right {
  flex: 1;
  padding: 10.500px 9px 0 0;
}
.reviews-label {
  line-height: 8px;
  font-size: 6px;
  margin-bottom: 1.800px;
}
.review-panel {
  height: 105px;
  background: #979797;
  border-radius: 1.500px;
  color: #dcdcdc;
}
.review-head {
  height: 13px;
  display: flex;
  align-items: center;
  justify-content: space-between;
  padding: 0 4.300px 0 7px;
  background: #b3b3b3;
  color: #1e1e1e;
  font-size: 5px;
}
.review-head .filter {
  background: #eee;
}
.review {
  height: 24px;
  margin: 0 6px 0 8px;
  padding: 3px 0 0 0;
  display: flex;
  align-items: flex-start;
  gap: 4px;
  font-size: 4.800px;
  line-height: 7px;
  border-bottom: .8px solid #111;
  white-space: nowrap;
}
.review:last-child {
  border-bottom: 0;
}
.review .ph {
  --bg: #e6e6e6;
  --line: #8a8a8a;
  width: 12px;
  height: 12px;
  margin: 2px 0 0 2.700px;
  border-radius: 50%;
  flex: none;
}

/* about */
.about h4 {
  height: 23.300px;
  line-height: 22px;
  text-align: center;
  font-size: 9px;
}
.about-grid {
  display: flex;
  gap: 12.300px;
  padding: 0 9px;
}
.about-grid .card {
  flex: 1;
  height: 95.400px;
}
.founders {
  padding: 4px 5px 0 4px;
  text-align: center;
  font-size: 5.500px;
  line-height: 7.250px;
  white-space: nowrap;
}
.founders figure {
  float: left;
  width: 32.300px;
  margin-right: 3px;
  font-size: 3px;
  line-height: 6px;
}
.founders figure .ph {
  --bg: #fff;
  --line: #8a8a8a;
  height: 32px;
}
.origin {
  font-size: 5.800px;
  line-height: 9px;
  margin-bottom: 2.500px;
}
.mission-text {
  padding-top: 9px;
  text-align: center;
  font-size: 5.500px;
  line-height: 7.250px;
  white-space: nowrap;
}

/* main page + popup */
.hero {
  --line: #666;
  position: relative;
  height: 101px;
  margin: 0 3.500px 0;
  flex: none;
}
.dots {
  position: absolute;
  left: 3.500px;
  bottom: 2px;
  display: flex;
  gap: 2.400px;
}
.dots i {
  width: 6px;
  height: 6px;
  border-radius: 50%;
  background: #eee;
}
.dots i:nth-child(2) {
  background: #b3b3b3;
}
.foot {
  display: flex;
  gap: 9px;
  padding: 7px 7px 0 10.300px;
  height: 40px;
}
.foot-card {
  height: 27px;
  background: #d9d9d9;
  text-align: center;
  font-size: 4.300px;
  line-height: 7px;
  white-space: nowrap;
}
.foot-card b {
  display: block;
  font-weight: 400;
  font-size: 8.200px;
  line-height: 11px;
  margin-top: 1.500px;
}
.contact { width: 71px; }
.mission { width: 85px; }
.socials { width: 76px; }
.foot-card.socials { margin-left: -1px; }
.social-icons {
  display: flex;
  justify-content: center;
  align-items: center;
  gap: 5px;
  stroke: none;
}
.social-icons svg {
  width: 12px;
  height: 12px;
  stroke: none;
}
.social-icons .yt {
  width: 15px;
  height: 11px;
}
.popup {
  position: absolute;
  left: 68px;
  top: 56px;
  width: 126px;
  height: 91px;
  display: flex;
  flex-direction: column;
  align-items: center;
  background: #d9d9d9;
  border: .7px solid #999;
  border-radius: 2px;
  font-size: 4.300px;
  text-align: center;
}
.popup strong {
  margin-top: 6px;
  font-size: 5.800px;
  font-weight: 600;
  line-height: 8px;
}
.popup p {
  margin-top: 2.500px;
  line-height: 6px;
  white-space: nowrap;
  margin-bottom: 10px;
}
.close {
  position: absolute;
  right: 3px;
  top: 1.500px;
  font-size: 8px;
  line-height: 8px;
  color: #000;
}
.pop-btn {
  height: 9.500px;
  margin-bottom: 3.300px;
  border: .6px solid #8a8a8a;
  border-radius: 3px;
  font-size: 2.300px;
  line-height: 8.500px;
  white-space: nowrap;
}
.w1 { width: 23px; }
.w2 { width: 36px; }
.w3 { width: 38px; }
.w4 { width: 27px; }
```
